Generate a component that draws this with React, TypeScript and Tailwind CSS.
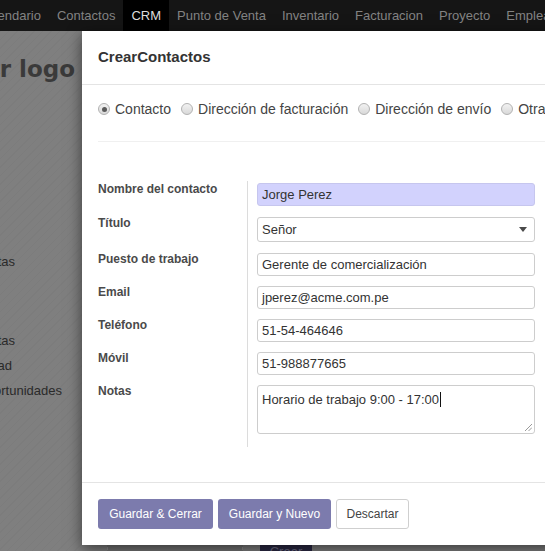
import React from "react";

const menu = ["Calendario", "Contactos", "CRM", "Punto de Venta", "Inventario", "Facturacion", "Proyecto", "Empleados"];

function Radio({ label, checked }: { label: string; checked?: boolean }) {
  return (
    <label className="flex items-center gap-[5px]">
      <span className="flex h-[12px] w-[12px] items-center justify-center rounded-full border border-[#b2b2b2] bg-gradient-to-b from-[#f2f2f2] to-[#d9d9d9]">
        {checked && <span className="h-[5px] w-[5px] rounded-full bg-[#5a5a5a]" />}
      </span>
      <span>{label}</span>
    </label>
  );
}

function Field({
  label,
  children,
  top = "pt-0",
  bottom = "pb-[10px]",
}: {
  label: string;
  children: React.ReactNode;
  top?: string;
  bottom?: string;
}) {
  return (
    <div className="flex">
      <div className={`w-[149px] shrink-0 ${top}`}>
        <span className="block text-[12px] font-bold leading-[12px] text-[#4a4a4a]">{label}</span>
      </div>
      <div className={`border-l border-[#dcdcdc] pl-[9px] ${top} ${bottom}`}>{children}</div>
    </div>
  );
}

function TextBox({ value }: { value: string }) {
  return (
    <div className="flex h-[23px] w-[278px] items-center rounded-[3px] border border-[#cdcdcd] px-[4px] text-[13px] text-[#333]">
      {value}
    </div>
  );
}

export default function App() {
  return (
    <div className="relative flex h-[551px] w-[545px] flex-col overflow-hidden bg-[#7f7f7f] font-['Liberation_Sans',Arial,sans-serif]">
      {/* top menu, dimmed by the dialog backdrop */}
      <nav className="flex h-[31px] shrink-0 items-stretch whitespace-nowrap bg-[#151515] text-[13px] text-[#838383]">
        <div className="ml-[-30px] flex">
          {menu.map((item) => (
            <span
              key={item}
              className={`flex items-center px-[8px] ${item === "CRM" ? "bg-black text-[#dedede]" : ""}`}
            >
              {item}
            </span>
          ))}
        </div>
      </nav>

      <div className="flex flex-1">
        <aside className="w-[82px] shrink-0 bg-[repeating-linear-gradient(135deg,rgba(0,0,0,0.025)_0px,rgba(0,0,0,0.025)_1px,transparent_1px,transparent_6px)] pt-[25px] text-[13px] leading-[16px] text-[#2a2a2a]">
          <div className="flex h-[26px] w-[75px] justify-end overflow-hidden whitespace-nowrap font-['DejaVu_Sans',sans-serif] text-[23px] font-bold leading-[26px] text-[#3a3a3a]">
            Your logo
          </div>
          <div className="mt-[172px] flex w-[15px] justify-end overflow-hidden whitespace-nowrap">Ventas</div>
          <div className="mt-[63px] flex w-[15px] justify-end overflow-hidden whitespace-nowrap">Cuentas</div>
          <div className="mt-[9px] flex w-[12px] justify-end overflow-hidden whitespace-nowrap">Actividad</div>
          <div className="mt-[9px] flex w-[62px] justify-end overflow-hidden whitespace-nowrap">Oportunidades</div>
        </aside>
        <main className="flex flex-1 flex-col">
          <div className="mb-[-10px] mt-auto flex h-[25px]">
            <div className="ml-[25px] w-[136px] border border-dashed border-[#8c8c8c] bg-[#747474]" />
            <div className="ml-[17px] flex w-[52px] items-center justify-center bg-[#2b2944] pt-[6px] text-[13px] text-[#6d6b85]">
              Crear
            </div>
          </div>
        </main>
      </div>

      {/* dialog */}
      <div className="absolute left-[82px] top-[31px] flex w-[500px] flex-col bg-white shadow-[0_4px_14px_rgba(0,0,0,0.55)]">
        <header className="flex h-[54px] items-center border-b border-[#e4e4e4] px-4">
          <h4 className="text-[15px] font-bold text-[#333]">CrearContactos</h4>
        </header>

        <div className="px-4 pb-[35px] pt-4">
          <div className="flex h-[16px] items-center gap-[10px] whitespace-nowrap text-[14px] text-[#444]">
            <Radio label="Contacto" checked />
            <Radio label="Dirección de facturación" />
            <Radio label="Dirección de envío" />
            <Radio label="Otra dirección" />
          </div>
          <div className="mt-[24px] h-px bg-[#f0f0f0]" />

          <div className="mt-[39px] flex flex-col">
            <Field label="Nombre del contacto" top="pt-[2px]" bottom="pb-[11px]">
              <div className="flex h-[23px] w-[278px] items-center rounded-[3px] border border-[#c6c6ee] bg-[#d2d2fd] px-[4px] text-[13px] text-[#333]">
                Jorge Perez
              </div>
            </Field>
            <Field label="Título" bottom="pb-[11px]">
              <div className="flex h-[25px] w-[278px] items-center justify-between rounded-[3px] border border-[#cdcdcd] pl-[4px] pr-[7px] text-[13px] text-[#333]">
                <span>Señor</span>
                <svg width="8" height="5" viewBox="0 0 8 5">
                  <path d="M0 0h8L4 5z" fill="#4a4a4a" />
                </svg>
              </div>
            </Field>
            <Field label="Puesto de trabajo">
              <TextBox value="Gerente de comercialización" />
            </Field>
            <Field label="Email">
              <TextBox value="jperez@acme.com.pe" />
            </Field>
            <Field label="Teléfono">
              <TextBox value="51-54-464646" />
            </Field>
            <Field label="Móvil">
              <TextBox value="51-988877665" />
            </Field>
            <Field label="Notas" bottom="pb-[13px]">
              <div className="relative h-[49px] w-[278px] rounded-[3px] border border-[#cdcdcd] px-[4px] pt-[3px] text-[13px] leading-[16px] text-[#333]">
                <span>Horario de trabajo 9:00 - 17:00</span>
                <span className="ml-px inline-block h-[15px] w-px translate-y-[3px] bg-[#111]" />
                <svg className="absolute bottom-[2px] right-[2px]" width="7" height="7" viewBox="0 0 7 7">
                  <path d="M7 0L0 7M7 3.5L3.5 7" stroke="#9a9a9a" strokeWidth="1" />
                </svg>
              </div>
            </Field>
          </div>
        </div>

        <footer className="flex gap-[5px] border-t border-[#e4e4e4] px-4 pb-4 pt-4 text-[12px]">
          <button className="h-[30px] w-[115px] rounded-[3px] bg-[#7c7bad] text-white">Guardar &amp; Cerrar</button>
          <button className="h-[30px] w-[113px] rounded-[3px] bg-[#7c7bad] text-white">Guardar y Nuevo</button>
          <button className="h-[30px] w-[73px] rounded-[3px] border border-[#cfcfcf] bg-white text-[#444]">Descartar</button>
        </footer>
      </div>
    </div>
  );
}
